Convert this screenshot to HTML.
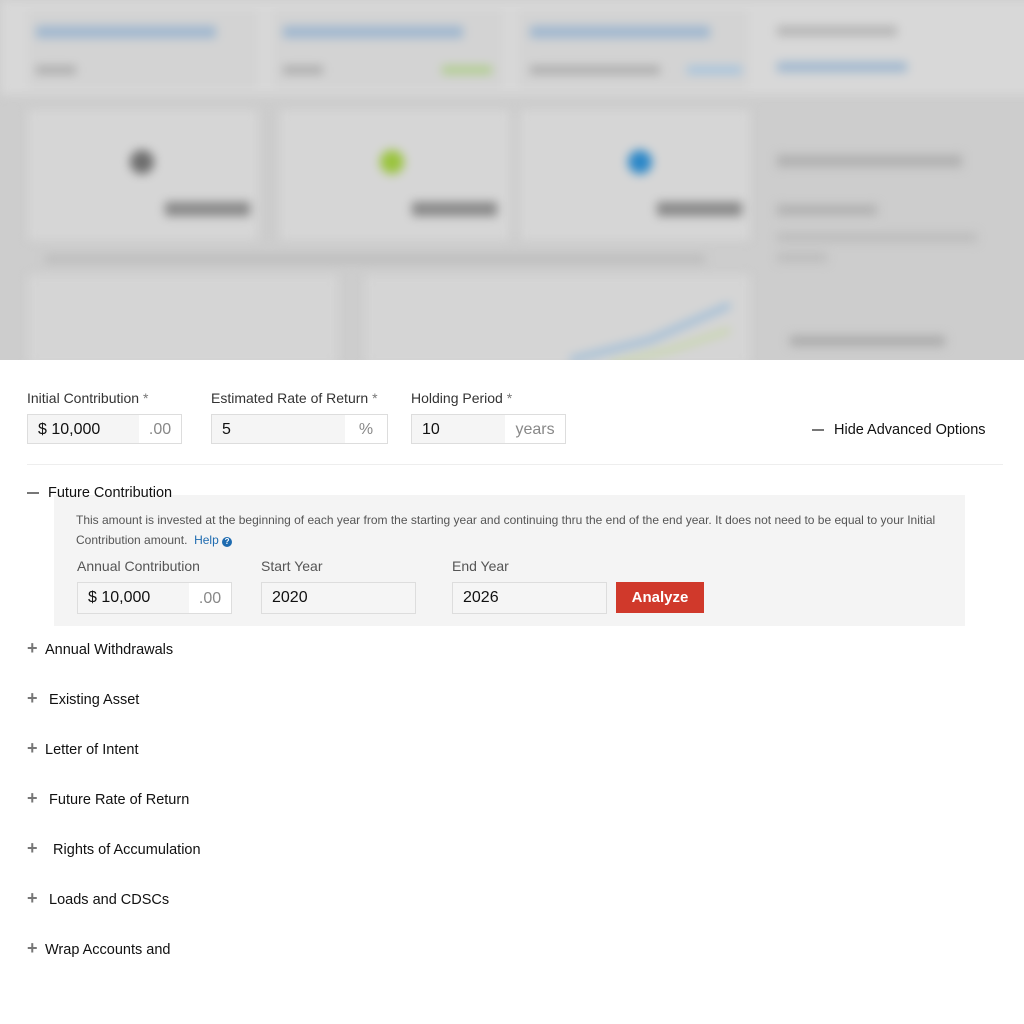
<!DOCTYPE html>
<html><head><style>
body{margin:0;width:1024px;height:1024px;background:#fff;font-family:"Liberation Sans",Arial,sans-serif;position:relative;overflow:hidden;color:#222}
.top{position:absolute;left:0;top:0;width:1024px;height:360px;background:#cdcdcd;overflow:hidden}
.blur{position:absolute;left:-10px;top:-10px;width:1044px;height:380px;filter:blur(5px)}
.b{position:absolute}
.lbl{position:absolute;font-size:14px;color:#333}
.inp{position:absolute;height:30px;border:1px solid #ddd;background:#f5f5f5;box-sizing:border-box;font-size:16px;line-height:28px;padding-left:10px;color:#111}
.suf{position:absolute;right:0;top:0;bottom:0;background:#fff;color:#888;text-align:center;font-size:16px}
.item{position:absolute;left:27px;font-size:14.5px;color:#111}
.plus{display:inline-block;width:12px;font-size:18px;color:#777;margin-right:6px;font-weight:bold}
</style></head><body>
<div class="top"><div class="blur">
<div class="b" style="left:10px;top:10px;width:1044px;height:95px;background:#d8d8d8"></div>
<div class="b" style="left:38px;top:20px;width:230px;height:78px;background:#d3d3d3"></div>
<div class="b" style="left:283px;top:20px;width:230px;height:78px;background:#d3d3d3"></div>
<div class="b" style="left:528px;top:20px;width:230px;height:78px;background:#d3d3d3"></div>
<div class="b" style="left:46px;top:36px;width:180px;height:12px;background:#9fb7cf"></div>
<div class="b" style="left:293px;top:36px;width:180px;height:12px;background:#9fb7cf"></div>
<div class="b" style="left:540px;top:36px;width:180px;height:12px;background:#9fb7cf"></div>
<div class="b" style="left:46px;top:76px;width:40px;height:8px;background:#aaa"></div>
<div class="b" style="left:293px;top:76px;width:40px;height:8px;background:#aaa"></div>
<div class="b" style="left:540px;top:76px;width:130px;height:8px;background:#aaa"></div>
<div class="b" style="left:452px;top:76px;width:50px;height:8px;background:#aecd8a"></div>
<div class="b" style="left:697px;top:76px;width:55px;height:8px;background:#a5c3dd"></div>
<div class="b" style="left:787px;top:36px;width:120px;height:10px;background:#b5b5b5"></div>
<div class="b" style="left:787px;top:72px;width:130px;height:10px;background:#9fb7cf"></div>
<div class="b" style="left:38px;top:120px;width:230px;height:130px;background:#d6d6d6"></div>
<div class="b" style="left:290px;top:120px;width:230px;height:130px;background:#d6d6d6"></div>
<div class="b" style="left:530px;top:120px;width:230px;height:130px;background:#d6d6d6"></div>
<div class="b" style="left:140px;top:160px;width:24px;height:24px;border-radius:50%;background:#6e6e6e"></div>
<div class="b" style="left:390px;top:160px;width:24px;height:24px;border-radius:50%;background:#9ac43e"></div>
<div class="b" style="left:638px;top:160px;width:24px;height:24px;border-radius:50%;background:#2b87c8"></div>
<div class="b" style="left:175px;top:212px;width:85px;height:14px;background:#888"></div>
<div class="b" style="left:422px;top:212px;width:85px;height:14px;background:#888"></div>
<div class="b" style="left:667px;top:212px;width:85px;height:14px;background:#888"></div>
<div class="b" style="left:55px;top:265px;width:660px;height:8px;background:#bbb"></div>
<div class="b" style="left:787px;top:165px;width:185px;height:12px;background:#b0b0b0"></div>
<div class="b" style="left:787px;top:215px;width:100px;height:10px;background:#b0b0b0"></div>
<div class="b" style="left:787px;top:243px;width:200px;height:9px;background:#bcbcbc"></div>
<div class="b" style="left:787px;top:263px;width:50px;height:9px;background:#bcbcbc"></div>
<div class="b" style="left:38px;top:285px;width:310px;height:90px;background:#d5d5d5"></div>
<div class="b" style="left:375px;top:285px;width:385px;height:90px;background:#d5d5d5"></div>
<div class="b" style="left:800px;top:346px;width:155px;height:10px;background:#aaa"></div>
<svg class="b" style="left:560px;top:300px" width="200" height="80"><polyline points="20,70 100,50 180,15" stroke="#8fb6d8" stroke-width="5" fill="none"/><polyline points="60,75 120,60 180,40" stroke="#c2d79a" stroke-width="4" fill="none"/></svg>
</div></div>

<div class="lbl" style="left:27px;top:390px">Initial Contribution <span style="color:#777">*</span></div>
<div class="lbl" style="left:211px;top:390px">Estimated Rate of Return <span style="color:#777">*</span></div>
<div class="lbl" style="left:411px;top:390px">Holding Period <span style="color:#777">*</span></div>
<div class="inp" style="left:27px;top:414px;width:155px;line-height:30px">$ 10,000<div class="suf" style="width:42px;line-height:30px">.00</div></div>
<div class="inp" style="left:211px;top:414px;width:177px;line-height:30px">5<div class="suf" style="width:42px;line-height:30px">%</div></div>
<div class="inp" style="left:411px;top:414px;width:155px;line-height:30px">10<div class="suf" style="width:60px;line-height:30px">years</div></div>
<div style="position:absolute;left:812px;top:422px;font-size:14.5px;color:#111"><span style="display:inline-block;width:12px;height:2px;background:#777;vertical-align:middle;margin-right:10px"></span>Hide Advanced Options</div>
<div style="position:absolute;left:27px;top:464px;width:976px;height:1px;background:#eee"></div>

<div style="position:absolute;left:54px;top:495px;width:911px;height:131px;background:#f4f4f4"></div>
<div class="item" style="top:485px"><span style="display:inline-block;width:12px;height:2px;background:#777;vertical-align:middle;margin-right:9px"></span>Future Contribution</div>
<div style="position:absolute;left:76px;top:510px;width:880px;font-size:12px;line-height:20px;color:#555">This amount is invested at the beginning of each year from the starting year and continuing thru the end of the end year. It does not need to be equal to your Initial Contribution amount. &nbsp;<span style="color:#1e6bb0">Help</span> <span style="display:inline-block;width:10px;height:10px;border-radius:50%;background:#1e6bb0;color:#fff;font-size:8px;line-height:10px;text-align:center;font-weight:bold">?</span></div>
<div class="lbl" style="left:77px;top:558px;color:#555">Annual Contribution</div>
<div class="lbl" style="left:261px;top:558px;color:#555">Start Year</div>
<div class="lbl" style="left:452px;top:558px;color:#555">End Year</div>
<div class="inp" style="left:77px;top:582px;width:155px;height:32px;line-height:30px">$ 10,000<div class="suf" style="width:42px;line-height:32px">.00</div></div>
<div class="inp" style="left:261px;top:582px;width:155px;height:32px;line-height:30px">2020</div>
<div class="inp" style="left:452px;top:582px;width:155px;height:32px;line-height:30px">2026</div>
<div style="position:absolute;left:616px;top:582px;width:88px;height:31px;background:#d0392b;color:#fff;font-weight:bold;font-size:15px;line-height:31px;text-align:center">Analyze</div>

<div class="item" style="top:638px"><span class="plus">+</span>Annual Withdrawals</div>
<div class="item" style="top:688px"><span class="plus">+</span>&nbsp;Existing Asset</div>
<div class="item" style="top:738px"><span class="plus">+</span>Letter of Intent</div>
<div class="item" style="top:788px"><span class="plus">+</span>&nbsp;Future Rate of Return</div>
<div class="item" style="top:838px"><span class="plus">+</span>&nbsp;&nbsp;Rights of Accumulation</div>
<div class="item" style="top:888px"><span class="plus">+</span>&nbsp;Loads and CDSCs</div>
<div class="item" style="top:938px"><span class="plus">+</span>Wrap Accounts and</div>
</body></html>
